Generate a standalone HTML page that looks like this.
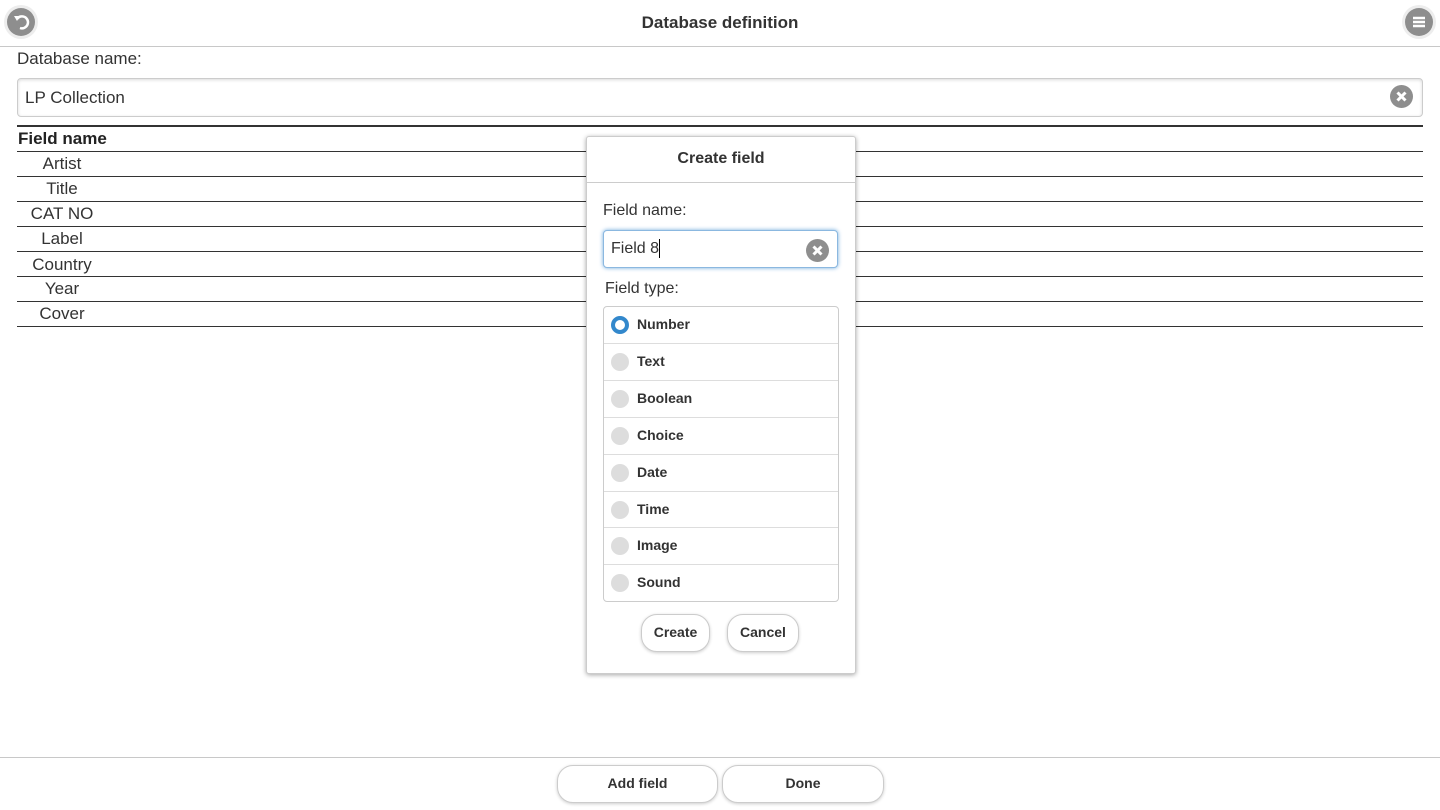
<!DOCTYPE html>
<html><head><meta charset="utf-8"><style>
body{margin:0;width:1440px;height:810px;background:#fff;font-family:"Liberation Sans",Arial,sans-serif;color:#333;position:relative;overflow:hidden}
.abs{position:absolute}
.hdr{left:0;top:0;width:1440px;height:46px;border-bottom:1px solid #c8c8c8;text-align:center;font-weight:bold;font-size:17px;line-height:46px;color:#333}
.ic{width:28px;height:28px;border-radius:50%;background:#8e8e8e;box-shadow:0 0 0 3px #ededed;}
.ic svg{position:absolute;left:0;top:0}
.inp{border:1px solid #ccc;border-radius:4px;box-shadow:inset 0 1px 3px rgba(0,0,0,.15);background:#fff;font-size:17px;color:#333}
.xb{width:23px;height:23px;border-radius:50%;background:#8e8e8e}
.line{left:17px;width:1406px;height:1px;background:#333}
.row{left:17px;width:90px;text-align:center;font-size:17px;color:#333}
.dlg{left:586px;top:136px;width:268px;height:536px;background:#fff;border:1px solid #ccc;border-radius:3px;box-shadow:0 1px 5px rgba(0,0,0,.35)}
.opt{position:absolute;left:0;width:234px;height:36px;border-top:1px solid #ddd;font-weight:bold;font-size:14px;line-height:34px;color:#333}
.opt:first-child{border-top:none}
.rad{position:absolute;left:7px;top:9px;width:18px;height:18px;border-radius:50%;background:#ddd}
.opt span{position:absolute;left:33px}
.btn{border:1px solid #ccc;border-radius:16px;background:#fff;box-shadow:0 1px 3px rgba(0,0,0,.2);font-weight:bold;font-size:14px;text-align:center;color:#333}
</style></head><body>
<div class="abs hdr">Database definition</div>
<div class="abs ic" style="left:7px;top:8px"><svg width="28" height="28" viewBox="0 0 28 28"><path d="M10 11 A6 6 0 1 1 13 20" fill="none" stroke="#fff" stroke-width="2.5"/><path d="M7 8 L13 8 L10 13 Z" fill="#fff"/></svg></div>
<div class="abs ic" style="left:1405px;top:8px"><svg width="28" height="28" viewBox="0 0 28 28"><path d="M8 10h12M8 14h12M8 18h12" stroke="#fff" stroke-width="2.5"/></svg></div>
<div class="abs" style="left:17px;top:49px;font-size:17px">Database name:</div>
<div class="abs inp" style="left:17px;top:78px;width:1404px;height:37px;line-height:37px"><span style="margin-left:7px">LP Collection</span></div>
<div class="abs xb" style="left:1390px;top:85px"><svg width="23" height="23"><path d="M7.5 7.5l8 8M15.5 7.5l-8 8" stroke="#fff" stroke-width="3"/></svg></div>
<div class="abs line" style="top:125px;height:2px"></div>
<div class="abs" style="left:18px;top:129px;font-weight:bold;font-size:17px;color:#222">Field name</div>
<div class="abs" style="left:745px;top:133px;font-weight:bold;font-size:17px;color:#222">Type</div>
<div class="abs line" style="top:151px"></div>
<div class="abs line" style="top:176px"></div>
<div class="abs line" style="top:201px"></div>
<div class="abs line" style="top:226px"></div>
<div class="abs line" style="top:251px"></div>
<div class="abs line" style="top:276px"></div>
<div class="abs line" style="top:301px"></div>
<div class="abs line" style="top:326px"></div>
<div class="abs row" style="top:154px">Artist</div>
<div class="abs row" style="top:179px">Title</div>
<div class="abs row" style="top:204px">CAT NO</div>
<div class="abs row" style="top:229px">Label</div>
<div class="abs row" style="top:255px">Country</div>
<div class="abs row" style="top:279px">Year</div>
<div class="abs row" style="top:304px">Cover</div>

<div class="abs dlg">
 <div style="height:45px;border-bottom:1px solid #ccc;text-align:center;line-height:44px;font-weight:bold;font-size:16px;color:#333">Create field</div>
 <div class="abs" style="left:16px;top:65px;font-size:16px">Field name:</div>
 <div class="abs inp" style="left:16px;top:93px;width:233px;height:36px;line-height:36px;border-color:#8bb8e0;box-shadow:0 0 4px #6fa9dc;font-size:16px"><span style="margin-left:7px">Field 8</span><span style="display:inline-block;width:1px;height:19px;background:#000;vertical-align:middle"></span></div>
 <div class="abs xb" style="left:219px;top:102px"><svg width="23" height="23"><path d="M7.5 7.5l8 8M15.5 7.5l-8 8" stroke="#fff" stroke-width="3"/></svg></div>
 <div class="abs" style="left:18px;top:143px;font-size:16px">Field type:</div>
 <div class="abs" style="left:16px;top:169px;width:234px;height:294px;border:1px solid #ccc;border-radius:4px">
  <div class="opt" style="top:0"><div class="rad" style="width:10px;height:10px;border:4px solid #3388cc;background:#fff"></div><span>Number</span></div>
  <div class="opt" style="top:36px"><div class="rad"></div><span>Text</span></div>
  <div class="opt" style="top:73px"><div class="rad"></div><span>Boolean</span></div>
  <div class="opt" style="top:110px"><div class="rad"></div><span>Choice</span></div>
  <div class="opt" style="top:147px"><div class="rad"></div><span>Date</span></div>
  <div class="opt" style="top:184px"><div class="rad"></div><span>Time</span></div>
  <div class="opt" style="top:220px"><div class="rad"></div><span>Image</span></div>
  <div class="opt" style="top:257px"><div class="rad"></div><span>Sound</span></div>
 </div>
 <div class="abs btn" style="left:54px;top:477px;width:67px;height:36px;line-height:35px">Create</div>
 <div class="abs btn" style="left:140px;top:477px;width:70px;height:36px;line-height:35px">Cancel</div>
</div>

<div class="abs" style="left:0;top:757px;width:1440px;height:1px;background:#c8c8c8"></div>
<div class="abs btn" style="left:557px;top:765px;width:159px;height:36px;line-height:34px">Add field</div>
<div class="abs btn" style="left:722px;top:765px;width:160px;height:36px;line-height:34px">Done</div>
</body></html>
